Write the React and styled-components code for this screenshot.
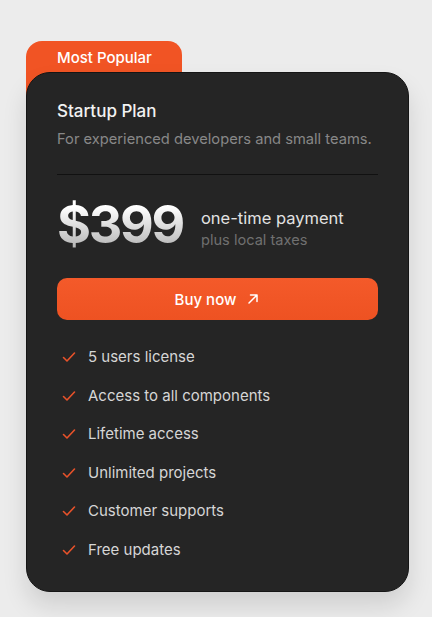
import React from "react";
import styled, { createGlobalStyle } from "styled-components";

const GlobalStyle = createGlobalStyle`
  * { box-sizing: border-box; }
  body {
    margin: 0;
    background: #ececec;
    font-family: Inter, "Noto Sans", sans-serif;
    -webkit-font-smoothing: antialiased;
  }
`;

const features = [
  "5 users license",
  "Access to all components",
  "Lifetime access",
  "Unlimited projects",
  "Customer supports",
  "Free updates",
];

const Page = styled.div`
  width: 432px;
  height: 617px;
  padding: 41px 23px 0 26px;
`;

const Wrapper = styled.div`
  position: relative;
  width: 383px;
`;

const Tab = styled.div`
  width: 156px;
  height: 60px;
  margin-bottom: -29px;
  background: #f15424;
  border-radius: 16px 14px 0 0;
  color: #fff;
  font-size: 15px;
  font-weight: 500;
  padding: 7px 0 0 31px;
  line-height: 20px;
`;

const Card = styled.div`
  position: relative;
  background: #252525;
  border: 1px solid #151515;
  border-radius: 24px;
  padding: 26px 30px 32px 30px;
  height: 520px;
  box-shadow: 0 14px 24px rgba(0, 0, 0, 0.12);
`;

const Title = styled.h2`
  margin: 0;
  font-size: 17px;
  font-weight: 500;
  color: #f2f2f2;
  line-height: 24px;
`;

const Subtitle = styled.p`
  margin: 5px 0 0;
  font-size: 14.7px;
  color: #888;
  line-height: 22px;
  white-space: nowrap;
`;

const Divider = styled.hr`
  margin: 24px 0 0;
  border: 0;
  border-top: 1px solid #111;
`;

const PriceRow = styled.div`
  display: flex;
  align-items: center;
  gap: 18px;
  margin-top: 24px;
`;

const Price = styled.div`
  font-size: 52px;
  font-weight: 700;
  letter-spacing: -2.3px;
  line-height: 52px;
  background: linear-gradient(180deg, #ffffff 15%, #b0b0b0 100%);
  -webkit-background-clip: text;
  background-clip: text;
  color: transparent;
`;

const PriceNote = styled.div`
  display: flex;
  flex-direction: column;
  gap: 1px;
  margin-top: 7px;
`;

const NoteMain = styled.span`
  font-size: 16.5px;
  color: #e2e2e2;
  line-height: 22px;
`;

const NoteSub = styled.span`
  font-size: 14.6px;
  color: #707070;
  line-height: 20px;
`;

const BuyButton = styled.button`
  display: flex;
  align-items: center;
  justify-content: center;
  gap: 10px;
  width: 100%;
  height: 42px;
  margin-top: 27px;
  border: 0;
  border-radius: 10px;
  background: linear-gradient(180deg, #f45a2a 0%, #ee5222 100%);
  color: #fff;
  font-family: inherit;
  font-size: 15px;
  font-weight: 500;
  cursor: pointer;
`;

const List = styled.ul`
  list-style: none;
  margin: 26px 0 0;
  padding: 0 0 0 5px;
  display: flex;
  flex-direction: column;
  gap: 16.5px;
`;

const Item = styled.li`
  display: flex;
  align-items: center;
  gap: 12px;
  font-size: 15px;
  line-height: 22px;
  color: #d6d6d6;
`;

const Check = () => (
  <svg width="14" height="14" viewBox="0 0 14 14" fill="none">
    <path d="M1.5 7.5 L5 11 L12.5 3" stroke="#e8522a" strokeWidth="1.6" strokeLinecap="round" strokeLinejoin="round" />
  </svg>
);

const Arrow = () => (
  <svg width="14" height="14" viewBox="0 0 14 14" fill="none">
    <path d="M3 11 L11 3 M4.5 3 H11 V9.5" stroke="#fff" strokeWidth="1.5" strokeLinecap="round" strokeLinejoin="round" />
  </svg>
);

const App = () => (
  <Page>
    <GlobalStyle />
    <Wrapper>
      <Tab>Most Popular</Tab>
      <Card>
        <Title>Startup Plan</Title>
        <Subtitle>For experienced developers and small teams.</Subtitle>
        <Divider />
        <PriceRow>
          <Price>$399</Price>
          <PriceNote>
            <NoteMain>one-time payment</NoteMain>
            <NoteSub>plus local taxes</NoteSub>
          </PriceNote>
        </PriceRow>
        <BuyButton>
          Buy now <Arrow />
        </BuyButton>
        <List>
          {features.map((f) => (
            <Item key={f}>
              <Check />
              {f}
            </Item>
          ))}
        </List>
      </Card>
    </Wrapper>
  </Page>
);

export default App;
